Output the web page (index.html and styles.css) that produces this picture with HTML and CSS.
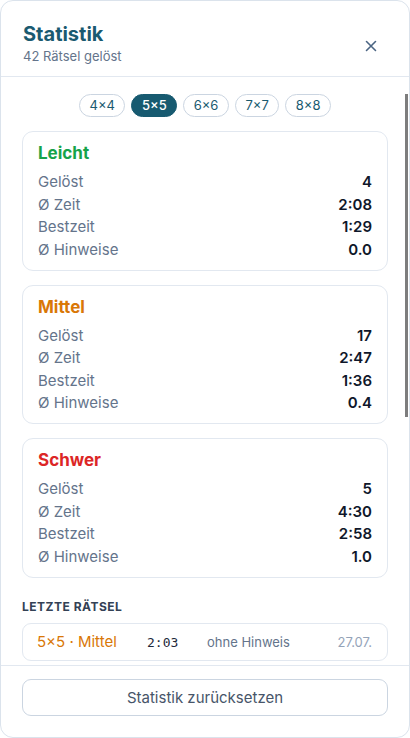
FILE: index.html
```html
<!DOCTYPE html>
<html lang="de">
<head>
<meta charset="utf-8">
<title>Statistik</title>
<link rel="stylesheet" href="styles.css">
</head>
<body>
<div class="dialog">
  <header class="head">
    <div class="head-text">
      <h1 class="title">Statistik</h1>
      <p class="subtitle">42 Rätsel gelöst</p>
    </div>
    <button class="close" aria-label="Schließen">
      <svg width="12" height="12" viewBox="0 0 12 12"><path d="M1.5 1.5 L10.5 10.5 M10.5 1.5 L1.5 10.5" stroke="#4b6583" stroke-width="1.6" stroke-linecap="round" fill="none"/></svg>
    </button>
  </header>
  <div class="body-wrap">
    <div class="body">
      <div class="pills">
        <span class="pill">4×4</span>
        <span class="pill active">5×5</span>
        <span class="pill">6×6</span>
        <span class="pill">7×7</span>
        <span class="pill">8×8</span>
      </div>
      <section class="card">
        <h2 class="card-title easy">Leicht</h2>
        <div class="row"><span class="lbl">Gelöst</span><span class="val">4</span></div>
        <div class="row"><span class="lbl">Ø Zeit</span><span class="val">2:08</span></div>
        <div class="row"><span class="lbl">Bestzeit</span><span class="val">1:29</span></div>
        <div class="row"><span class="lbl">Ø Hinweise</span><span class="val">0.0</span></div>
      </section>
      <section class="card">
        <h2 class="card-title medium">Mittel</h2>
        <div class="row"><span class="lbl">Gelöst</span><span class="val">17</span></div>
        <div class="row"><span class="lbl">Ø Zeit</span><span class="val">2:47</span></div>
        <div class="row"><span class="lbl">Bestzeit</span><span class="val">1:36</span></div>
        <div class="row"><span class="lbl">Ø Hinweise</span><span class="val">0.4</span></div>
      </section>
      <section class="card">
        <h2 class="card-title hard">Schwer</h2>
        <div class="row"><span class="lbl">Gelöst</span><span class="val">5</span></div>
        <div class="row"><span class="lbl">Ø Zeit</span><span class="val">4:30</span></div>
        <div class="row"><span class="lbl">Bestzeit</span><span class="val">2:58</span></div>
        <div class="row"><span class="lbl">Ø Hinweise</span><span class="val">1.0</span></div>
      </section>
      <h3 class="section">Letzte Rätsel</h3>
      <div class="recent">
        <div class="rec"><span class="rec-name medium">5×5 · Mittel</span><span class="rec-time">2:03</span><span class="rec-hint">ohne Hinweis</span><span class="rec-date">27.07.</span></div>
      </div>
    </div>
    <div class="thumb"></div>
  </div>
  <footer class="foot">
    <button class="reset">Statistik zurücksetzen</button>
  </footer>
</div>
</body>
</html>
```
FILE: styles.css
```css
* { box-sizing: border-box; }
html, body { margin: 0; padding: 0; background: #ffffff; }
body {
  font-family: Inter, "Noto Sans", "Liberation Sans", sans-serif;
  color: #0f172a;
}
.dialog {
  width: 410px;
  height: 738px;
  border: 1px solid #dbe3ec;
  border-radius: 13px;
  display: flex;
  flex-direction: column;
  overflow: hidden;
  background: #fff;
}
.head {
  display: flex;
  align-items: center;
  justify-content: space-between;
  padding: 21px 22px 11px 22px;
  border-bottom: 1px solid #e2e8f0;
}
.title {
  margin: 0;
  font-size: 20px;
  line-height: 24px;
  font-weight: 700;
  color: #1a5a70;
}
.subtitle {
  margin: 1px 0 0;
  font-size: 13px;
  line-height: 18px;
  color: #64748b;
}
.close {
  width: 32px;
  height: 32px;
  border: 0;
  background: transparent;
  padding: 0;
  display: flex;
  align-items: center;
  justify-content: center;
  margin-top: 5px;
}
.body-wrap {
  flex: 1;
  position: relative;
  overflow: hidden;
}
.body {
  height: 100%;
  overflow: hidden;
  padding: 17px 21px 0 21px;
}
.thumb {
  position: absolute;
  right: 1px;
  top: 17px;
  width: 3px;
  height: 323px;
  background: #7d7d7d;
}
.pills {
  display: flex;
  justify-content: center;
  gap: 6px;
  margin-bottom: 14px;
}
.pill {
  height: 23px;
  padding: 0 9.5px;
  border: 1px solid #cbd5e1;
  border-radius: 12px;
  font-size: 13px;
  line-height: 21px;
  color: #1a5a70;
  background: #fff;
}
.pill.active {
  background: #175a70;
  border-color: #175a70;
  color: #fff;
  font-weight: 500;
}
.card {
  border: 1px solid #e2e8f0;
  border-radius: 11px;
  padding: 11px 15px 8.5px 15px;
  margin-bottom: 14px;
}
.card-title {
  margin: 0 0 7px;
  font-size: 17px;
  line-height: 21px;
  font-weight: 700;
}
.easy { color: #16a34a; }
.medium { color: #d97706; }
.hard { color: #dc2626; }
.row {
  display: flex;
  justify-content: space-between;
  font-size: 15px;
  line-height: 22.5px;
}
.lbl { color: #64748b; }
.val { font-weight: 600; color: #0f172a; }
.section {
  margin: 21px 0 8px;
  font-size: 12px;
  line-height: 16px;
  font-weight: 700;
  letter-spacing: 0.5px;
  text-transform: uppercase;
  color: #334155;
}
.recent {
  display: flex;
  flex-direction: column;
  gap: 8px;
}
.rec {
  display: flex;
  align-items: baseline;
  border: 1px solid #e2e8f0;
  border-radius: 9px;
  padding: 8px 15px 8px 14px;
  height: 38px;
}
.rec-name {
  font-size: 15px;
  line-height: 20px;
  width: 110px;
}
.rec-time {
  font-family: "DejaVu Sans Mono", "Liberation Mono", monospace;
  font-size: 13px;
  color: #1e293b;
  width: 60px;
}
.rec-hint {
  font-size: 13px;
  color: #64748b;
}
.rec-date {
  margin-left: auto;
  font-size: 13px;
  color: #94a3b8;
}
.foot {
  border-top: 1px solid #e2e8f0;
  padding: 13px 21px 21px 21px;
}
.reset {
  width: 100%;
  height: 37px;
  border: 1px solid #cbd5e1;
  border-radius: 9px;
  background: #fff;
  font-family: Inter, "Noto Sans", "Liberation Sans", sans-serif;
  font-size: 15px;
  color: #475569;
}
```
